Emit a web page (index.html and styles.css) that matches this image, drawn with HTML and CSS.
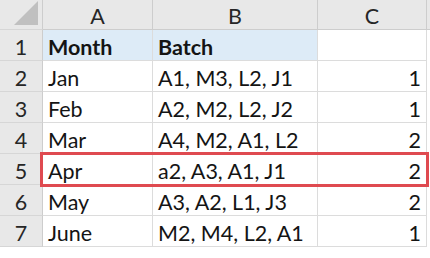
FILE: index.html
```html
<!DOCTYPE html>
<html>
<head>
<meta charset="utf-8">
<link rel="stylesheet" href="styles.css">
</head>
<body>
<div class="sheet">
  <div class="row head">
    <div class="rh corner"><span class="tri"></span></div>
    <div class="ch ca">A</div>
    <div class="ch cb">B</div>
    <div class="ch cc">C</div>
    <div class="ch rest"></div>
  </div>
  <div class="row">
    <div class="rh">1</div>
    <div class="cell ca blue bold">Month</div>
    <div class="cell cb blue bold">Batch</div>
    <div class="cell cc"></div>
    <div class="rest"></div>
  </div>
  <div class="row">
    <div class="rh">2</div>
    <div class="cell ca">Jan</div>
    <div class="cell cb">A1, M3, L2, J1</div>
    <div class="cell cc num">1</div>
    <div class="rest"></div>
  </div>
  <div class="row">
    <div class="rh">3</div>
    <div class="cell ca">Feb</div>
    <div class="cell cb">A2, M2, L2, J2</div>
    <div class="cell cc num">1</div>
    <div class="rest"></div>
  </div>
  <div class="row">
    <div class="rh">4</div>
    <div class="cell ca">Mar</div>
    <div class="cell cb">A4, M2, A1, L2</div>
    <div class="cell cc num">2</div>
    <div class="rest"></div>
  </div>
  <div class="row hl">
    <div class="rh">5</div>
    <div class="cell ca">Apr</div>
    <div class="cell cb">a2, A3, A1, J1</div>
    <div class="cell cc num">2</div>
    <div class="rest"></div>
  </div>
  <div class="row">
    <div class="rh">6</div>
    <div class="cell ca">May</div>
    <div class="cell cb">A3, A2, L1, J3</div>
    <div class="cell cc num">2</div>
    <div class="rest"></div>
  </div>
  <div class="row">
    <div class="rh">7</div>
    <div class="cell ca">June</div>
    <div class="cell cb">M2, M4, L2, A1</div>
    <div class="cell cc num">1</div>
    <div class="rest"></div>
  </div>
</div>
</body>
</html>
```

FILE: styles.css
```css
html, body {
  margin: 0;
  padding: 0;
  background: #ffffff;
}
body {
  width: 430px;
  height: 258px;
  overflow: hidden;
  font-family: Lato, "Open Sans", sans-serif;
  font-size: 21.5px;
  color: #141414;
}
.sheet {
  display: flex;
  flex-direction: column;
}
.row {
  display: flex;
  height: 31px;
  box-sizing: border-box;
}
.row.head {
  height: 30px;
  background: #e8e8e8;
}
.rh {
  width: 43px;
  flex: none;
  box-sizing: border-box;
  background: #e8e8e8;
  border-right: 1px solid #cdcdcd;
  border-bottom: 1px solid #d6d6d6;
  display: flex;
  align-items: center;
  justify-content: center;
  padding-top: 3px;
  color: #262626;
}
.corner {
  position: relative;
  align-items: flex-end;
  justify-content: flex-end;
  padding: 0 4px 4px 0;
}
.tri {
  width: 0;
  height: 0;
  border-left: 24px solid transparent;
  border-bottom: 24px solid #c0c0c0;
}
.ch {
  box-sizing: border-box;
  border-right: 1px solid #cdcdcd;
  border-bottom: 1px solid #cdcdcd;
  display: flex;
  align-items: center;
  justify-content: center;
  padding-top: 2px;
  color: #262626;
}
.ca { width: 110px; flex: none; }
.cb { width: 165px; flex: none; }
.cc { width: 109px; flex: none; }
.rest { flex: 1; }
.ch.rest { border-right: none; }
.cell {
  box-sizing: border-box;
  border-right: 1px solid #dcdcdc;
  border-bottom: 1px solid #dcdcdc;
  display: flex;
  align-items: center;
  padding: 3px 5px 0;
  white-space: nowrap;
}
.blue {
  background: #ddebf7;
}
.bold {
  font-weight: 700;
}
.num {
  justify-content: flex-end;
}
.hl {
  position: relative;
}
.hl::after {
  content: "";
  position: absolute;
  left: 40px;
  top: -2px;
  width: 389px;
  height: 35px;
  box-sizing: border-box;
  border: 3px solid #df4a50;
  pointer-events: none;
}
```
